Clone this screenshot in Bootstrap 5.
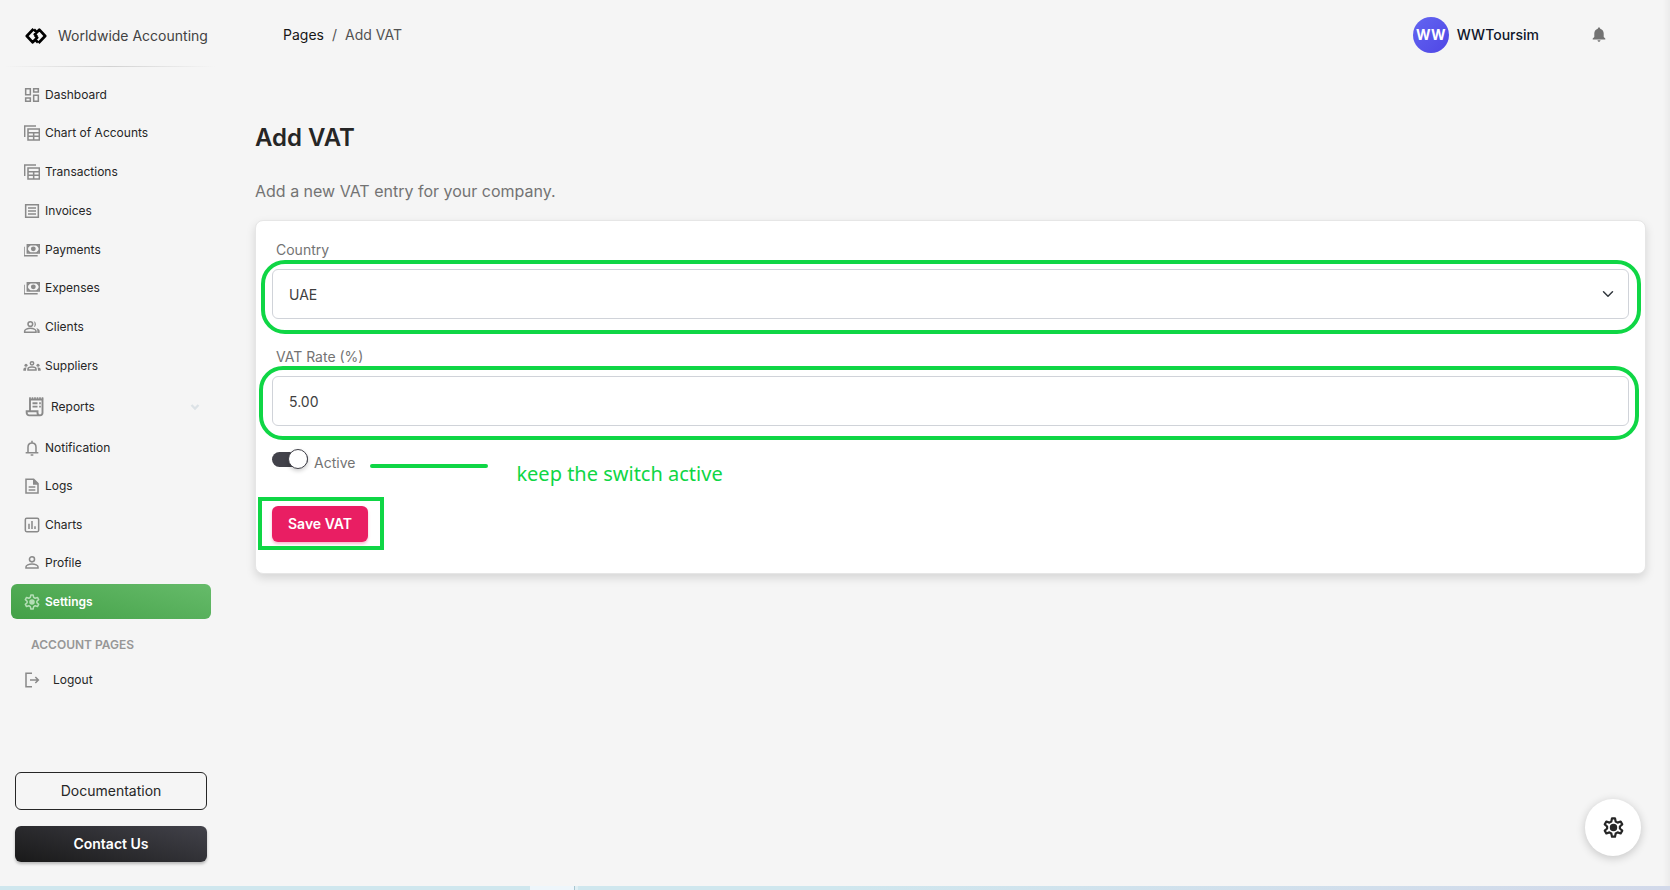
<!DOCTYPE html>
<html lang="en">
<head>
<meta charset="utf-8">
<meta name="viewport" content="width=device-width, initial-scale=1">
<title>Add VAT</title>
<link href="https://cdn.jsdelivr.net/npm/bootstrap@5.3.0/dist/css/bootstrap.min.css" rel="stylesheet">
<style>
  body { font-family: Inter, "Liberation Sans", sans-serif; background: #f5f5f5; color: #737373; font-size: 14px; line-height: 20px; }
  a { text-decoration: none; }
  .side { width: 223px; }
  .brand { height: 66px; padding: 6px 0 0 25px; gap: 11px; color: #424242; }
  .rule { height: 1px; margin: 0 8px 0 4px; background: linear-gradient(90deg, transparent, #d2d2d2, transparent); }
  .menu { padding: 9px 12px 0 11px; }
  .item { height: 39px; padding: 0 13px; gap: 5px; font-size: 12px; color: #262626; }
  .item.tight { height: 38px; }
  .item.report { height: 43px; padding: 0 8px 0 14px; gap: 6px; }
  .item.active { height: 35px; margin: 2px 0; border-radius: 6px; color: #fff; font-weight: 600; background: linear-gradient(195deg, #66bb6a, #43a047); }
  .item svg { width: 16px; height: 16px; fill: none; stroke: #8a8a8a; stroke-width: 2.3; flex: none; overflow: visible; }
  .item.report svg.big { width: 20px; height: 20px; }
  .item.active svg { stroke: #b4deb6; }
  .section-name { padding: 14px 20px 5px; font-size: 12px; font-weight: 600; color: #979797; }
  .foot { padding: 0 16px 28px 15px; gap: 16px; }
  .foot .btn, .btn-save { font-size: 14px; line-height: 20px; border-radius: 6px; }
  .btn-doc { height: 38px; border: 1px solid #262626; color: #262626; }
  .btn-contact, .btn-contact:hover { height: 36px; color: #fff; font-weight: 600; border: 0; background: linear-gradient(195deg, #42424a, #191919); box-shadow: 0 2px 3px rgba(0,0,0,.25); }
  .topbar { height: 70px; padding: 0 64px 0 28px; }
  .crumbs { font-size: 14px; gap: 8px; color: #525252; }
  .crumbs a { color: #171717; }
  .avatar { width: 36px; height: 36px; color: #fff; font-weight: 700; background: linear-gradient(135deg, #6366f1, #4f46e5); }
  .user { color: #0f172a; font-weight: 500; gap: 8px; margin-right: 53px; }
  .content { padding-right: 24px; }
  h1 { font-size: 24px; line-height: 32px; font-weight: 600; color: #262626; margin: 52px 0 25px; }
  .intro { font-size: 16px; line-height: 24px; margin: 0 0 17px; }
  .panel { background: #fff; border: 1px solid #e6e6e6; border-radius: 8px; padding: 19px 16px 31px; box-shadow: 0 4px 10px rgba(0,0,0,.13); }
  .field label { display: block; padding-left: 4px; margin-bottom: 9px; }
  .field + .field { margin-top: 28px; }
  .field .form-control, .field .form-select { height: 50px; border: 1px solid #d0d3d9; border-radius: 6px; padding: 0 16px; font-size: 14px; color: #404040; }
  .field .form-select { background-position: right 12px center; background-size: 16px 12px; }
  .marked { position: relative; }
  .marked::after { content: ""; position: absolute; inset: -9px -12px -15px -11px; border: 4px solid #0fd645; border-radius: 24px; pointer-events: none; }
  .marked.rate::after { inset: -10px -10px -14px -13px; }
  .marked.save::after { inset: -9px -16px -8px -14px; border-radius: 0; }
  .switch { appearance: none; width: 36px; height: 15px; margin: 0; border-radius: 8px; background: #42424a; position: relative; }
  .switch::after { content: ""; position: absolute; right: 0; top: -3px; width: 20px; height: 20px; background: #fff; border: 1px solid #42424a; border-radius: 50%; box-shadow: 0 2px 4px rgba(0,0,0,.2); }
  .toggle-row { height: 61px; margin-top: 3px; }
  .toggle-row label { margin: 6px 0 0 6px; }
  .dash { width: 118px; height: 4px; border-radius: 2px; background: #0fd645; margin: 12px 28px 0 15px; }
  .note { font-family: "Noto Sans", sans-serif; font-size: 20px; line-height: 28px; color: #0fd645; margin-top: 28px; }
  .btn-save, .btn-save:hover { height: 36px; padding: 0 16px; border: 0; color: #fff; font-weight: 600; background: #e91e63; box-shadow: 0 2px 3px rgba(233,30,99,.3); }
  .fab { position: fixed; right: 29px; bottom: 34px; width: 56px; height: 57px; border: 0; border-radius: 50%; background: #fff; box-shadow: 0 2px 10px rgba(0,0,0,.2); }
  .edge { position: fixed; right: 0; top: 0; bottom: 0; width: 7px; background: linear-gradient(90deg, transparent, rgba(0,0,0,.04)); }
  .strip { position: fixed; left: 0; right: 0; bottom: 0; height: 4px; background: linear-gradient(90deg, #cfe7ee 50%, #d2d9ea); }
  .strip i { width: 45px; margin-left: 530px; background: #eef6fb; border-right: 1px solid #a9c6d0; }
  .strip b { width: 3px; background: #e0eff4; }
</style>
</head>
<body>
<svg width="0" height="0" class="position-absolute" aria-hidden="true">
  <symbol id="table" viewBox="0 0 24 24"><path d="M1 18V1.500H18M6 6h17v16.500H6zM6 11.500h17M6 17h17M14.500 11.500v11"/></symbol>
  <symbol id="cash" viewBox="0 0 24 24"><path d="M0 7v13.500h20.500M5 4h18v12.500H5z"/><path d="M5 8l4-4M19 4l4 4M5 12.500l4 4M19 16.500l4-4"/><circle cx="14" cy="10.300" r="2.500" fill="#8a8a8a"/></symbol>
  <symbol id="gear" viewBox="0 0 24 24"><path stroke-linejoin="round" d="M10.300 1.500h3.400l.8 3.600 2.200 1.300 3.500-1.200 1.800 3.200-2.700 2.400v2.400l2.700 2.400-1.800 3.200-3.500-1.200-2.200 1.300-.8 3.600h-3.400l-.8-3.600-2.200-1.300-3.500 1.200L2 15.600l2.700-2.400v-2.400L2 8.400l1.800-3.200 3.500 1.200 2.200-1.300z"/><circle cx="12" cy="12" r="3" fill="currentColor"/></symbol>
</svg>
<div class="d-flex min-vh-100">
  <aside class="side d-flex flex-column flex-shrink-0">
    <a href="#" class="brand d-flex align-items-center">
      <svg width="22" height="16" viewBox="0 0 22 16" fill="none" stroke="#000" stroke-width="2.700" stroke-linejoin="round"><path d="M8.500 1L1.800 8l5.900 6.300 4.500-4.700L10 7.300M13.500 15l6.700-7-5.900-6.300-4.500 4.700L12 8.700M9 1.500l2.500 2.500M13 14.500L10.500 12"/></svg>
      <span>Worldwide Accounting</span>
    </a>
    <div class="rule"></div>
    <nav class="menu d-flex flex-column">
      <a href="#" class="item tight d-flex align-items-center"><svg viewBox="0 0 24 24"><path d="M2.500 2.500h7v9h-7zM14.500 2.500h7v5h-7zM14.500 12.500h7v9h-7zM2.500 16.500h7v5h-7z"/></svg>Dashboard</a>
      <a href="#" class="item tight d-flex align-items-center"><svg><use href="#table"/></svg>Chart of Accounts</a>
      <a href="#" class="item d-flex align-items-center"><svg><use href="#table"/></svg>Transactions</a>
      <a href="#" class="item d-flex align-items-center"><svg viewBox="0 0 24 24"><path d="M2.500 2.500h19v19h-19zM6 7.500h12M6 12h12M6 16.500h12"/></svg>Invoices</a>
      <a href="#" class="item d-flex align-items-center"><svg><use href="#cash"/></svg>Payments</a>
      <a href="#" class="item tight d-flex align-items-center"><svg><use href="#cash"/></svg>Expenses</a>
      <a href="#" class="item d-flex align-items-center"><svg viewBox="0 0 24 24"><circle cx="9.500" cy="7.500" r="3.500"/><path d="M1 20v-2c0-2 4-4 8.500-4s8.500 2 8.500 4v2z"/><path fill="#8a8a8a" stroke="none" d="M14.500 3a5 5 0 0 1 0 9.500c2-3 2-6.500 0-9.500zM18 13.500c3.500 1 5.500 2.500 5.500 4.500v3H20v-3c0-2-.5-3.500-2-4.500z"/></svg>Clients</a>
      <a href="#" class="item d-flex align-items-center"><svg viewBox="0 0 24 24"><circle cx="12" cy="8" r="2.500"/><path d="M6 18v-1.500c0-1.500 2.500-3 6-3s6 1.500 6 3V18z"/><g fill="#8a8a8a" stroke="none"><circle cx="3" cy="11" r="2.300"/><circle cx="21" cy="11" r="2.300"/><path d="M-1 19v-2c0-2 3-3 5-2.500-1 1-1 2.500-1 4.500zM25 19v-2c0-2-3-3-5-2.500 1 1 1 2.500 1 4.500z"/></g></svg>Suppliers</a>
      <a href="#" class="item report d-flex align-items-center"><svg class="big" viewBox="0 0 24 24"><path d="M6 16V3h15v16a3 3 0 0 1-3 3H5a3 3 0 0 1-3-3v-2h13v2a3 3 0 0 0 3 3M9 7.500h6M9 11.500h6M17 7.500h2M17 11.500h2"/><path stroke-dasharray="2 1" d="M5 1.500h17"/></svg>Reports<svg class="ms-auto" viewBox="0 0 16 16"><path stroke="#dce2e6" d="M4.500 6L8 9.500 11.500 6"/></svg></a>
      <a href="#" class="item d-flex align-items-center"><svg viewBox="0 0 24 24"><path d="M2.500 19h19M6 19v-8c0-4 2.500-6.500 6-6.500s6 2.500 6 6.500v8M12 1v3M10 22.500h4"/></svg>Notification</a>
      <a href="#" class="item tight d-flex align-items-center"><svg viewBox="0 0 24 24"><path d="M3 2h11.500L21 8.500V22.500H3zM7 13.500h10M7 18h10"/><path fill="#8a8a8a" stroke="none" d="M13.500 2l8 8h-8z"/></svg>Logs</a>
      <a href="#" class="item d-flex align-items-center"><svg viewBox="0 0 24 24"><rect x="2" y="2" width="20" height="20" rx="2"/><path d="M7.500 10v8M12 6v12M16.500 14v4"/></svg>Charts</a>
      <a href="#" class="item tight d-flex align-items-center"><svg viewBox="0 0 24 24"><circle cx="12" cy="6.500" r="3.800"/><path d="M3 19.500v-2c0-2 4-4 9-4s9 2 9 4v2z"/></svg>Profile</a>
      <a href="#" class="item active d-flex align-items-center" aria-current="page"><svg color="#b4deb6"><use href="#gear"/></svg>Settings</a>
      <div class="section-name">ACCOUNT PAGES</div>
      <a href="#" class="item d-flex align-items-center"><svg viewBox="0 0 24 24"><path d="M12 2H3v20h9M9 12h12M17 7.500l4.500 4.500-4.500 4.500"/></svg><span class="ms-2">Logout</span></a>
    </nav>
    <div class="foot d-flex flex-column mt-auto">
      <button type="button" class="btn btn-doc">Documentation</button>
      <button type="button" class="btn btn-contact">Contact Us</button>
    </div>
  </aside>
  <div class="flex-grow-1 ps-3">
    <div class="ms-3">
      <header class="topbar d-flex align-items-center">
        <nav class="crumbs d-flex" aria-label="Breadcrumb"><a href="#">Pages</a><span>/</span><span>Add VAT</span></nav>
        <a href="#" class="user d-flex align-items-center ms-auto"><span class="avatar rounded-circle d-flex align-items-center justify-content-center">WW</span>WWToursim</a>
        <a href="#" aria-label="Notifications"><svg class="d-block" width="14" height="16" viewBox="0 0 14 16" fill="#737373"><path d="M7 .5c.8 0 1.200.5 1.200 1.200 2.300.6 3.500 2.500 3.500 4.800V10L13.300 11.500V12.500H.7V11.500L2.300 10V6.500C2.300 4.200 3.500 2.300 5.800 1.700 5.800 1 6.200.5 7 .5zM5.500 13.300h3c0 .9-.7 1.500-1.500 1.500s-1.500-.6-1.500-1.500z"/></svg></a>
      </header>
      <main class="content">
        <h1>Add VAT</h1>
        <p class="intro">Add a new VAT entry for your company.</p>
        <form class="panel">
          <div class="field">
            <label for="country">Country</label>
            <div class="marked"><select id="country" class="form-select"><option>UAE</option></select></div>
          </div>
          <div class="field">
            <label for="rate">VAT Rate (%)</label>
            <div class="marked rate"><input id="rate" class="form-control" type="text" value="5.00"></div>
          </div>
          <div class="toggle-row d-flex align-items-center">
            <input class="switch" type="checkbox" role="switch" id="active" checked>
            <label for="active">Active</label>
            <span class="dash"></span>
            <span class="note">keep the switch active</span>
          </div>
          <div class="marked save d-inline-block mt-3"><button type="button" class="btn btn-save">Save VAT</button></div>
        </form>
      </main>
    </div>
  </div>
</div>
<div class="edge"></div>
<button type="button" class="fab d-flex align-items-center justify-content-center" aria-label="Settings"><svg width="21" height="21" fill="none" stroke="#262626" stroke-width="2.500" color="#262626"><use href="#gear"/></svg></button>
<div class="strip d-flex"><i></i><b></b></div>
<script src="https://cdn.jsdelivr.net/npm/bootstrap@5.3.0/dist/js/bootstrap.bundle.min.js"></script>
</body>
</html>
